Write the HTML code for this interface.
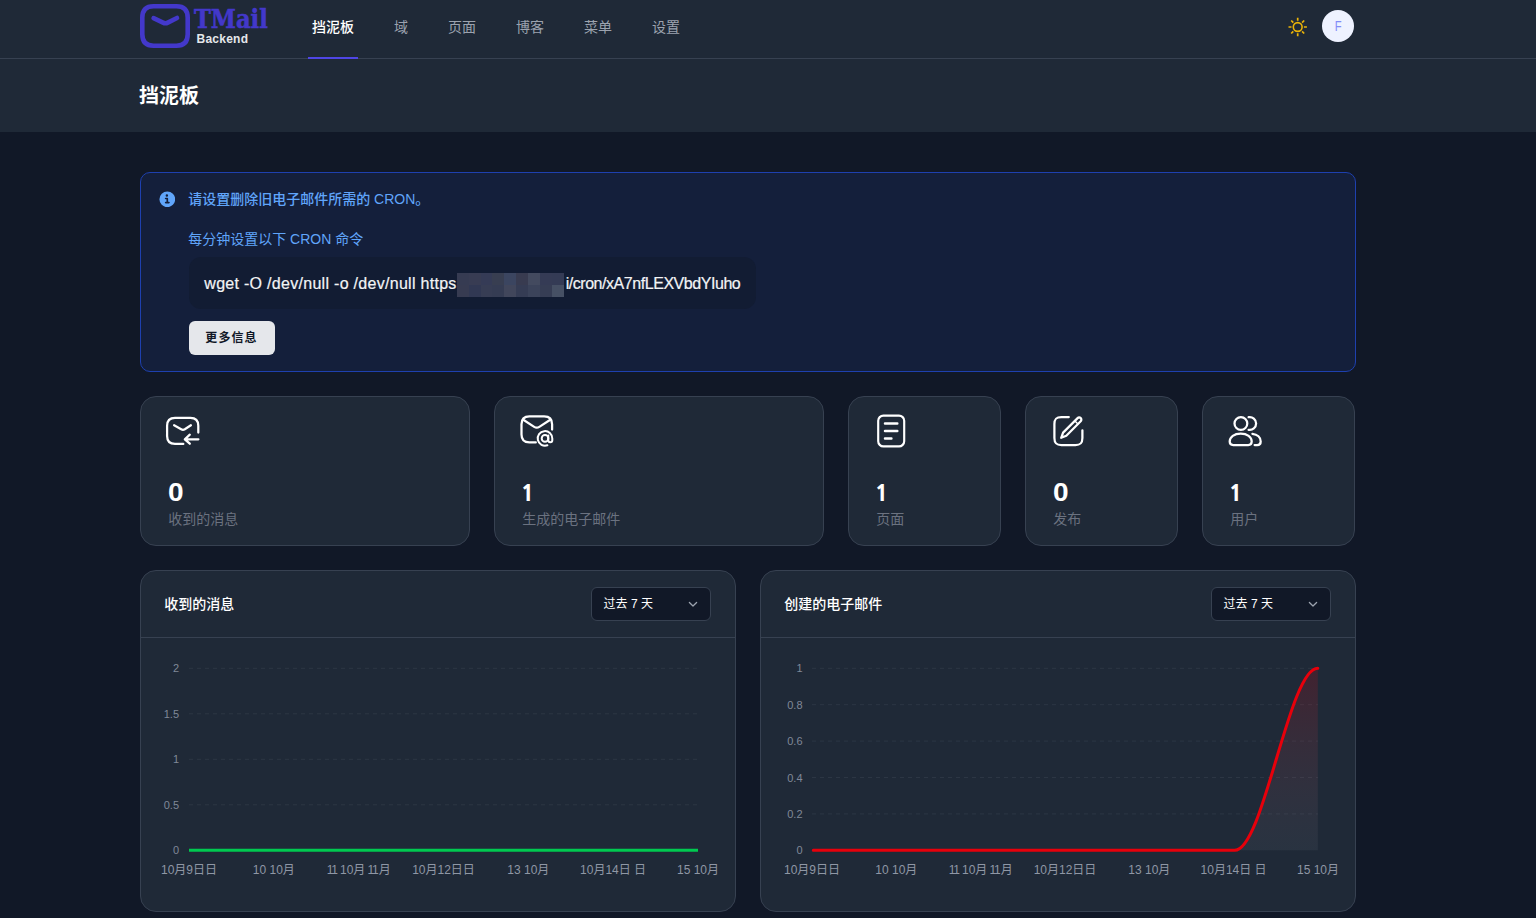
<!DOCTYPE html>
<html lang="zh-CN">
<head>
<meta charset="utf-8">
<title>TMail Backend</title>
<style>
*{box-sizing:border-box;margin:0;padding:0}
html,body{width:1536px;height:918px;overflow:hidden;background:#111827}
body{font-family:"Liberation Sans","Noto Sans CJK SC",sans-serif;color:#fff;position:relative;-webkit-font-smoothing:antialiased}
.abs{position:absolute}
/* header */
#hdr{position:absolute;left:0;top:0;width:1536px;height:59px;background:#1f2937;border-bottom:1px solid #374151}
#band{position:absolute;left:0;top:59px;width:1536px;height:73px;background:#1f2937}
.nav{position:absolute;top:0;height:59px;line-height:54px;font-size:14px;color:#9ca3af;padding:0 4px;white-space:nowrap;font-weight:400}
.nav.on{color:#fff;font-weight:500;border-bottom:2px solid #4f46e5}
#title{position:absolute;left:139px;top:81px;font-size:20px;line-height:30px;font-weight:700;color:#fff}
/* alert */
#alert{position:absolute;left:140px;top:172px;width:1216px;height:200px;border:1px solid #1e40af;border-radius:10px;background:#141f3b}
.atxt{position:absolute;left:47.2px;font-size:14px;line-height:20px;color:#60a5fa;white-space:nowrap}
#code{position:absolute;left:48px;top:84px;width:567px;height:52px;border-radius:12px;background:#121c33;color:#f3f4f6;font-size:16px;line-height:54px;padding-left:15.3px;white-space:nowrap;-webkit-text-stroke:.2px #f3f4f6}
#more{position:absolute;left:48px;top:148px;width:86px;height:34px;border-radius:6px;background:#e5e7eb;color:#111827;font-size:12px;line-height:34px;text-align:left;padding-left:16.3px;letter-spacing:1.1px;font-weight:700}
/* cards */
.card{position:absolute;top:396px;height:150px;background:#1f2937;border:1px solid #374151;border-radius:16px}
.card .num{position:absolute;left:28px;top:79px;font-size:25px;line-height:32px;font-weight:700;color:#fff}
.card .num.zero{left:27.3px;transform:scaleX(1.12);transform-origin:0 50%}
.card .num.one{left:25.8px;top:80px;font-family:"NanumGothic","Liberation Sans",sans-serif;font-weight:800;font-size:23px;transform:none}
.card .lbl{position:absolute;left:27.2px;top:112px;font-size:14px;line-height:20px;color:#6b7280;white-space:nowrap}
.card svg{position:absolute;left:24px;top:16px}
/* panels */
.panel{position:absolute;top:570px;width:596px;height:342px;background:#1f2937;border:1px solid #374151;border-radius:16px}
.panel .ph{position:absolute;left:0;top:0;width:100%;height:67px;border-bottom:1px solid #374151}
.panel .pt{position:absolute;left:23.3px;top:23px;font-size:14px;line-height:20px;font-weight:500;color:#fff}
.sel{position:absolute;right:24px;top:16px;width:120px;height:34px;border:1px solid #374151;border-radius:6px;background:#111827;font-size:12px;line-height:33px;padding-left:11.6px;color:#fff}

#logo{position:absolute;left:136px;top:0}
#tmail{position:absolute;left:194.4px;top:1.8px;font-family:"DejaVu Serif Condensed","DejaVu Serif","Liberation Serif",serif;font-weight:700;font-size:26px;line-height:34px;color:#4338ca;-webkit-text-stroke:.55px #4338ca;transform:scaleX(.968);transform-origin:0 0;white-space:nowrap}
#backend{position:absolute;left:196.5px;top:31px;font-size:12px;line-height:16px;font-weight:700;color:#e5e7eb;letter-spacing:.25px}
#sun{position:absolute;left:1286px;top:15px}
#avatar{position:absolute;left:1322px;top:10px;width:32px;height:32px;border-radius:50%;background:#eef2ff;color:#818cf8;font-size:14px;line-height:32px;text-align:center}
#info{position:absolute;left:17.7px;top:17.6px}
#mosaic{display:inline-block;vertical-align:top;position:relative;width:107px;height:52px;margin:0 1px}
#mosaic i{position:absolute;width:12px;height:12px;display:block}
#pre{letter-spacing:.29px}#post{letter-spacing:-.45px}
</style>
</head>
<body>
<div id="hdr"></div>
<div id="band"></div>

<svg id="logo" width="60" height="56" viewBox="0 0 60 56" fill="none" stroke="#4338ca" stroke-width="4.6" stroke-linecap="round" stroke-linejoin="round">
  <path d="M40.5 45.7H17.5C10.5 45.7 6.3 42.2 6.3 34.2V17.8C6.3 9.8 10.5 6.3 17.5 6.3H40.5C47.5 6.3 51.7 9.8 51.7 17.8V34.2C51.7 42.2 47.5 45.7 40.5 45.7Z"/>
  <path d="M17.6 18.2L27 22.6C28.6 23.4 30.2 23.4 31.8 22.6L41 18"/>
</svg>
<div id="tmail">TMail</div>
<div id="backend">Backend</div>
<svg id="sun" width="24" height="24" viewBox="0 0 24 24" fill="none" stroke="#eab308" stroke-width="1.6">
  <circle cx="11.7" cy="12" r="4.4"/>
  <g stroke-width="1.7"><path d="M11.7 2.8v3M11.7 18.2v3M2.5 12h3M17.9 12h3M5.2 5.5l2.1 2.1M16.1 16.4l2.1 2.1M5.2 18.5l2.1-2.1M16.1 7.6l2.1-2.1"/></g>
</svg>
<div id="avatar"><span style="display:inline-block;transform:scaleX(.8)">F</span></div>
<div id="title">挡泥板</div>
<div class="nav on" style="left:308px">挡泥板</div>
<div class="nav" style="left:390px">域</div>
<div class="nav" style="left:444px">页面</div>
<div class="nav" style="left:512px">博客</div>
<div class="nav" style="left:580px">菜单</div>
<div class="nav" style="left:648px">设置</div>

<div id="alert">
  <svg id="info" width="16.6" height="16.6" viewBox="0 0 20 20" fill="#60a5fa"><path d="M10 .5a9.5 9.5 0 1 0 9.5 9.5A9.51 9.51 0 0 0 10 .5ZM9.5 4a1.5 1.5 0 1 1 0 3 1.5 1.5 0 0 1 0-3ZM12 15H8a1 1 0 0 1 0-2h1v-3H8a1 1 0 0 1 0-2h2a1 1 0 0 1 1 1v4h1a1 1 0 0 1 0 2Z"/></svg>
  <div class="atxt" style="top:16px;font-weight:500">请设置删除旧电子邮件所需的 CRON。</div>
  <div class="atxt" style="top:56px">每分钟设置以下 CRON 命令</div>
  <div id="code"><span id="pre">wget -O /dev/null -o /dev/null https</span><span id="mosaic"><i style="left:-0.9px;top:16px;background:#363b52"></i><i style="left:11.0px;top:16px;background:#383c53"></i><i style="left:22.9px;top:16px;background:#353b56"></i><i style="left:34.8px;top:16px;background:#383e51"></i><i style="left:46.7px;top:16px;background:#3b4560"></i><i style="left:58.6px;top:16px;background:#383b50"></i><i style="left:70.5px;top:16px;background:#434a5f"></i><i style="left:82.4px;top:16px;background:#353b55"></i><i style="left:94.3px;top:16px;background:#343b55"></i><i style="left:-0.9px;top:28px;background:#373b51"></i><i style="left:11.0px;top:28px;background:#313853"></i><i style="left:22.9px;top:28px;background:#373d54"></i><i style="left:34.8px;top:28px;background:#353c53"></i><i style="left:46.7px;top:28px;background:#41465b"></i><i style="left:58.6px;top:28px;background:#353c54"></i><i style="left:70.5px;top:28px;background:#3b435a"></i><i style="left:82.4px;top:28px;background:#363d54"></i><i style="left:94.3px;top:28px;background:#465064"></i></span><span id="post">i/cron/xA7nfLEXVbdYIuho</span></div>
  <div id="more">更多信息</div>
</div>

<div class="card" style="left:140px;width:330px"><div class="num zero">0</div><div class="lbl">收到的消息</div></div>
<div class="card" style="left:494px;width:330px"><div class="num one">1</div><div class="lbl">生成的电子邮件</div></div>
<div class="card" style="left:848px;width:153px"><div class="num one">1</div><div class="lbl">页面</div></div>
<div class="card" style="left:1025px;width:153px"><div class="num zero">0</div><div class="lbl">发布</div></div>
<div class="card" style="left:1202px;width:153px"><div class="num one">1</div><div class="lbl">用户</div></div>


<svg class="abs" style="left:0;top:396px" width="1536" height="70" viewBox="0 396 1536 70" fill="none" stroke="#fff" stroke-width="2.25" stroke-linecap="round" stroke-linejoin="round">
  <!-- received -->
  <path d="M183.3 443.9H175C169.5 443.9 167.1 441.5 167.1 436V425.8C167.1 420.3 169.5 417.9 175 417.9H190.4C195.9 417.9 198.3 420.3 198.3 425.8V432.6"/>
  <path d="M174.1 425.3L181.2 429.3C182.4 430 183.6 430 184.8 429.3L190.9 425.3"/>
  <path d="M198.4 439.3H185M189.8 434.7L184.8 439.3L189.8 443.7"/>
  <!-- generated (mail @) -->
  <path d="M535.8 442.4H529.4C523.9 442.4 521.5 440 521.5 434.5V424.2C521.5 418.7 523.9 416.3 529.4 416.3H544.2C549.7 416.3 552.1 418.7 552.1 424.2V429.6"/>
  <path d="M523.3 419.8L534.2 426.9C535.9 428 537.6 428 539.3 426.9L550.3 419.8"/>
  <circle cx="545" cy="438.4" r="3.3" stroke-width="2"/>
  <path d="M548.3 435.4V440.2A2 2 0 0 0 552.3 440.2V438.4A7.3 7.3 0 1 0 547.4 445.3" stroke-width="2"/>
  <!-- pages -->
  <rect x="878.2" y="415.6" width="26" height="30.8" rx="5.2" stroke-width="2.15"/>
  <path d="M885 423.5H897.3M885 431H897.3M885 438.5H891.4" stroke-width="2.5"/>
  <!-- posts -->
  <path d="M1068.8 417H1061.4C1056.2 417 1054.4 418.8 1054.4 424V438C1054.4 443.2 1056.2 445 1061.4 445H1075.4C1080.6 445 1082.4 443.2 1082.4 438V430.3"/>
  <path d="M1061.2 437.8L1063.1 432.6L1077.6 418.1A2.1 2.1 0 0 1 1080.7 421.2L1066.3 435.8Z"/>
  <path d="M1075.2 421.2L1077.7 423.7" stroke-width="1.4"/>
  <!-- users -->
  <circle cx="1240.9" cy="423.5" r="6.4"/>
  <path d="M1248.6 417.2A6.4 6.4 0 1 1 1248.6 429.8"/>
  <path d="M1233.2 445C1230.7 445 1229.7 443.6 1229.7 441.6C1229.7 437 1234.2 433.6 1240.7 433.6C1247.2 433.6 1251.7 437 1251.7 441.6C1251.7 443.6 1250.7 445 1248.2 445Z"/>
  <path d="M1252.4 433.8C1257.4 434.3 1260.7 437.4 1260.7 441.4C1260.7 443.6 1259.7 445 1257.2 445H1254.6"/>
</svg>
<div class="panel" style="left:140px"><div class="ph"><div class="pt">收到的消息</div><div class="sel">过去 7 天<svg class="abs" style="right:12px;top:13px" width="10" height="7" viewBox="0 0 10 7" fill="none" stroke="#9ca3af" stroke-width="1.3" stroke-linecap="round" stroke-linejoin="round"><path d="M1.4 1.5L5 5L8.6 1.5"/></svg></div></div></div>
<div class="panel" style="left:760px"><div class="ph"><div class="pt">创建的电子邮件</div><div class="sel">过去 7 天<svg class="abs" style="right:12px;top:13px" width="10" height="7" viewBox="0 0 10 7" fill="none" stroke="#9ca3af" stroke-width="1.3" stroke-linecap="round" stroke-linejoin="round"><path d="M1.4 1.5L5 5L8.6 1.5"/></svg></div></div></div>
<svg class="abs" style="left:140px;top:638px" width="596" height="272" viewBox="0 68 596 272" font-family="'Liberation Sans','Noto Sans CJK SC',sans-serif">
<line x1="49" x2="558" y1="98.3" y2="98.3" stroke="#374151" stroke-opacity=".55" stroke-width="1" stroke-dasharray="4 4"/>
<line x1="49" x2="558" y1="143.8" y2="143.8" stroke="#374151" stroke-opacity=".55" stroke-width="1" stroke-dasharray="4 4"/>
<line x1="49" x2="558" y1="189.3" y2="189.3" stroke="#374151" stroke-opacity=".55" stroke-width="1" stroke-dasharray="4 4"/>
<line x1="49" x2="558" y1="234.8" y2="234.8" stroke="#374151" stroke-opacity=".55" stroke-width="1" stroke-dasharray="4 4"/>
<text x="39" y="102.3" text-anchor="end" font-size="11" fill="#7f8897">2</text>
<text x="39" y="147.8" text-anchor="end" font-size="11" fill="#7f8897">1.5</text>
<text x="39" y="193.3" text-anchor="end" font-size="11" fill="#7f8897">1</text>
<text x="39" y="238.8" text-anchor="end" font-size="11" fill="#7f8897">0.5</text>
<text x="39" y="284.3" text-anchor="end" font-size="11" fill="#7f8897">0</text>
<line x1="49" x2="558" y1="280.3" y2="280.3" stroke="#00c950" stroke-width="3"/>
<text x="49.0" y="304" text-anchor="middle" font-size="12" fill="#8f97a5">10月9日日</text>
<text x="133.8" y="304" text-anchor="middle" font-size="12" fill="#8f97a5">10 10月</text>
<text x="218.7" y="304" text-anchor="middle" font-size="12" fill="#8f97a5" word-spacing="-1.2"><tspan letter-spacing="-2.2">1</tspan>1 10月 <tspan letter-spacing="-2.2">1</tspan>1月</text>
<text x="303.5" y="304" text-anchor="middle" font-size="12" fill="#8f97a5">10月12日日</text>
<text x="388.3" y="304" text-anchor="middle" font-size="12" fill="#8f97a5">13 10月</text>
<text x="473.1" y="304" text-anchor="middle" font-size="12" fill="#8f97a5">10月14日 日</text>
<text x="558.0" y="304" text-anchor="middle" font-size="12" fill="#8f97a5">15 10月</text>
</svg>
<svg class="abs" style="left:760px;top:638px" width="596" height="272" viewBox="0 68 596 272" font-family="'Liberation Sans','Noto Sans CJK SC',sans-serif">
<defs><linearGradient id="ag" x1="0" y1="0" x2="0" y2="1"><stop offset="0" stop-color="#e7000b" stop-opacity=".17"/><stop offset="1" stop-color="#9ca3af" stop-opacity=".08"/></linearGradient></defs>
<line x1="52" x2="558" y1="98.3" y2="98.3" stroke="#374151" stroke-opacity=".55" stroke-width="1" stroke-dasharray="4 4"/>
<line x1="52" x2="558" y1="134.7" y2="134.7" stroke="#374151" stroke-opacity=".55" stroke-width="1" stroke-dasharray="4 4"/>
<line x1="52" x2="558" y1="171.1" y2="171.1" stroke="#374151" stroke-opacity=".55" stroke-width="1" stroke-dasharray="4 4"/>
<line x1="52" x2="558" y1="207.5" y2="207.5" stroke="#374151" stroke-opacity=".55" stroke-width="1" stroke-dasharray="4 4"/>
<line x1="52" x2="558" y1="243.9" y2="243.9" stroke="#374151" stroke-opacity=".55" stroke-width="1" stroke-dasharray="4 4"/>
<text x="42.5" y="102.3" text-anchor="end" font-size="11" fill="#7f8897">1</text>
<text x="42.5" y="138.7" text-anchor="end" font-size="11" fill="#7f8897">0.8</text>
<text x="42.5" y="175.1" text-anchor="end" font-size="11" fill="#7f8897">0.6</text>
<text x="42.5" y="211.5" text-anchor="end" font-size="11" fill="#7f8897">0.4</text>
<text x="42.5" y="247.9" text-anchor="end" font-size="11" fill="#7f8897">0.2</text>
<text x="42.5" y="284.3" text-anchor="end" font-size="11" fill="#7f8897">0</text>
<path d="M474.7 280.3C503.8 280.3 528.7 98.3 557.8 98.3V280.3Z" fill="url(#ag)"/>
<path d="M53.3 280.3H474.7C503.8 280.3 528.7 98.3 557.8 98.3" fill="none" stroke="#e7000b" stroke-width="3" stroke-linecap="round"/>
<text x="52.0" y="304" text-anchor="middle" font-size="12" fill="#8f97a5">10月9日日</text>
<text x="136.3" y="304" text-anchor="middle" font-size="12" fill="#8f97a5">10 10月</text>
<text x="220.7" y="304" text-anchor="middle" font-size="12" fill="#8f97a5" word-spacing="-1.2"><tspan letter-spacing="-2.2">1</tspan>1 10月 <tspan letter-spacing="-2.2">1</tspan>1月</text>
<text x="305.0" y="304" text-anchor="middle" font-size="12" fill="#8f97a5">10月12日日</text>
<text x="389.3" y="304" text-anchor="middle" font-size="12" fill="#8f97a5">13 10月</text>
<text x="473.6" y="304" text-anchor="middle" font-size="12" fill="#8f97a5">10月14日 日</text>
<text x="558.0" y="304" text-anchor="middle" font-size="12" fill="#8f97a5">15 10月</text>
</svg>
</body>
</html>
